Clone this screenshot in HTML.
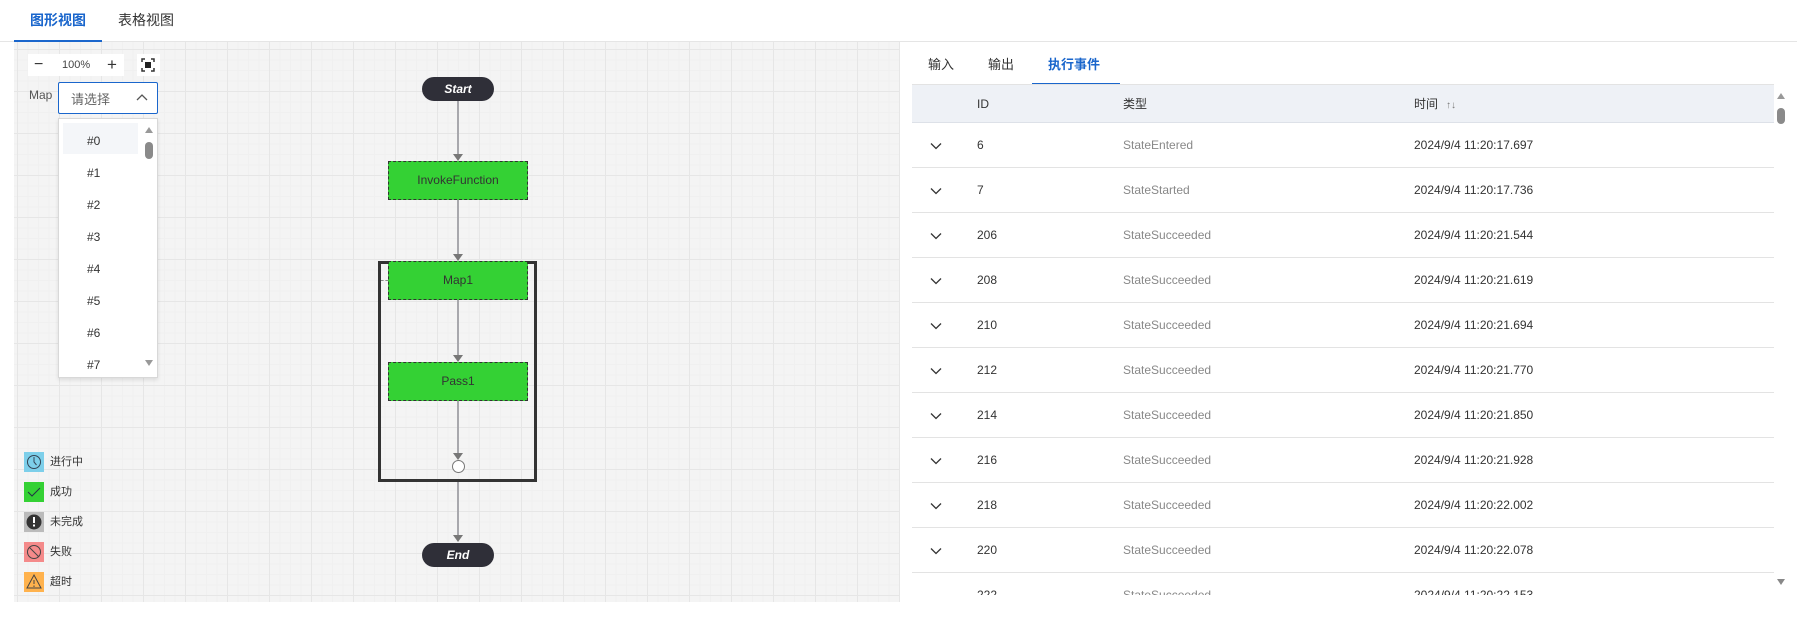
<!DOCTYPE html>
<html><head><meta charset="utf-8"><style>
*{box-sizing:border-box;margin:0;padding:0}
body{width:1797px;height:616px;background:#fff;font-family:"Liberation Sans","Noto Sans CJK SC",sans-serif;position:relative;overflow:hidden;color:#333}
.abs{position:absolute}
.toptab{position:absolute;top:10px;font-size:14px;line-height:20px}
.canvas{position:absolute;left:14px;top:42px;width:886px;height:560px;background-color:#f4f4f4;
background-image:linear-gradient(to right,#e6e6e6 1px,transparent 1px),linear-gradient(to bottom,#e6e6e6 1px,transparent 1px),linear-gradient(to right,#f0f0f0 1px,transparent 1px),linear-gradient(to bottom,#f0f0f0 1px,transparent 1px);
background-size:42px 42px,42px 42px,10.5px 10.5px,10.5px 10.5px;background-position:3px 7px,3px 7px,3px 7px,3px 7px}
.node{position:absolute;left:388px;width:140px;height:39px;background:#34d134;border:1px dashed #333;font-size:12px;color:#333;text-align:center;line-height:37px}
.pill{position:absolute;left:422px;width:72px;height:24px;border-radius:12px;background:#2f2f38;color:#fff;font-weight:bold;font-style:italic;font-size:12px;text-align:center;line-height:24px}
.vl{position:absolute;left:457px;width:2px;background:#a8a8ad}
.arr{position:absolute;left:453px;width:0;height:0;border-left:5px solid transparent;border-right:5px solid transparent;border-top:7px solid #777}
.item{position:absolute;left:62px;width:78px;height:30px;font-size:12px;color:#333;padding-left:25px;line-height:30px}
.leg{position:absolute;left:24px;width:20px;height:20px}
.legt{position:absolute;left:50px;font-size:11px;line-height:20px;color:#333}
.row{position:absolute;left:912px;width:862px;height:45px;border-bottom:1px solid #e3e3e3;font-size:12px}
.row span{position:absolute;top:0;line-height:45px}
.row svg{position:absolute;left:18px;top:19px}
.hd{position:absolute;top:0;line-height:38px}
</style></head><body>
<div class="toptab" style="left:30px;color:#1a66cc;font-weight:bold">图形视图</div>
<div class="toptab" style="left:118px;color:#333">表格视图</div>
<div class="abs" style="left:0;top:41px;width:1797px;height:1px;background:#e5e5e5"></div>
<div class="abs" style="left:14px;top:40px;width:88px;height:2px;background:#1a66cc"></div>

<div class="canvas"></div>
<div class="abs" style="left:28px;top:54px;width:96px;height:22px;background:#fff;font-size:11px;line-height:22px">
 <span class="abs" style="left:6px;font-size:16px">−</span><span class="abs" style="left:34px;color:#444">100%</span><span class="abs" style="left:79px;font-size:17px">+</span></div>
<div class="abs" style="left:137px;top:54px;width:23px;height:22px;background:#fff"></div>
<svg class="abs" style="left:141px;top:58px" width="14" height="14" viewBox="0 0 14 14"><path d="M1 4V1h3M10 1h3v3M13 10v3h-3M4 13H1v-3" fill="none" stroke="#333" stroke-width="1.5"/><rect x="4" y="4" width="6" height="6" fill="#222"/></svg>
<div class="abs" style="left:29px;top:88px;font-size:12px;color:#555">Map</div>
<div class="abs" style="left:58px;top:82px;width:100px;height:32px;background:#fff;border:1px solid #1a66cc;border-radius:2px"></div>
<div class="abs" style="left:71px;top:89px;font-size:13px;color:#666">请选择</div>
<svg class="abs" style="left:136px;top:93px" width="12" height="8" viewBox="0 0 12 8"><path d="M1 7L6 2l5 5" fill="none" stroke="#555" stroke-width="1.3"/></svg>
<div class="abs" style="left:58px;top:118px;width:100px;height:260px;background:#fff;border:1px solid #d8d8d8;box-shadow:0 2px 4px rgba(0,0,0,.1)"></div>
<div class="abs" style="left:63px;top:123px;width:75px;height:31px;background:#f4f6f9"></div>
<div class="item" style="top:126px">#0</div><div class="item" style="top:158px">#1</div><div class="item" style="top:190px">#2</div><div class="item" style="top:222px">#3</div><div class="item" style="top:254px">#4</div><div class="item" style="top:286px">#5</div><div class="item" style="top:318px">#6</div><div class="item" style="top:350px">#7</div>
<div class="abs" style="left:145px;top:127px;border-left:4px solid transparent;border-right:4px solid transparent;border-bottom:6px solid #999"></div>
<div class="abs" style="left:145px;top:142px;width:8px;height:17px;border-radius:4px;background:#8a8a8a"></div>
<div class="abs" style="left:145px;top:360px;border-left:4px solid transparent;border-right:4px solid transparent;border-top:6px solid #999"></div>

<div class="vl" style="top:101px;height:55px"></div><div class="arr" style="top:154px"></div>
<div class="vl" style="top:200px;height:56px"></div><div class="arr" style="top:254px"></div>
<div class="abs" style="left:378px;top:261px;width:159px;height:221px;border:3px solid #333"></div>
<div class="abs" style="left:381px;top:280px;width:7px;border-top:1px dashed #888"></div>
<div class="vl" style="top:300px;height:57px"></div><div class="arr" style="top:355px"></div>
<div class="vl" style="top:401px;height:57px"></div><div class="arr" style="top:453px"></div>
<div class="vl" style="top:482px;height:55px"></div><div class="arr" style="top:535px"></div>
<div class="pill" style="top:77px">Start</div>
<div class="node" style="top:161px">InvokeFunction</div>
<div class="node" style="top:261px">Map1</div>
<div class="node" style="top:362px">Pass1</div>
<div class="abs" style="left:452px;top:460px;width:13px;height:13px;border-radius:50%;background:#fff;border:1px solid #777"></div>
<div class="pill" style="top:543px">End</div>

<div class="leg" style="top:452px;background:#7dcfea"><svg width="20" height="20"><circle cx="10" cy="10" r="6.5" fill="none" stroke="#345" stroke-width="1"/><path d="M10 5v5l2.5 3" fill="none" stroke="#345"/></svg></div><div class="legt" style="top:452px">进行中</div>
<div class="leg" style="top:482px;background:#34d134"><svg width="20" height="20"><path d="M4 10l4 4 8-8" fill="none" stroke="#234" stroke-width="1"/></svg></div><div class="legt" style="top:482px">成功</div>
<div class="leg" style="top:512px;background:#bbb"><svg width="20" height="20"><circle cx="10" cy="10" r="7.5" fill="#333"/><rect x="9" y="5" width="2" height="6" fill="#fff"/><rect x="9" y="12.5" width="2" height="2" fill="#fff"/></svg></div><div class="legt" style="top:512px">未完成</div>
<div class="leg" style="top:542px;background:#f48a8a"><svg width="20" height="20"><circle cx="10" cy="10" r="6.5" fill="none" stroke="#444"/><path d="M5.5 5.5l9 9" stroke="#444"/></svg></div><div class="legt" style="top:542px">失败</div>
<div class="leg" style="top:572px;background:#ffb24d"><svg width="20" height="20"><path d="M10 3L17 16H3z" fill="none" stroke="#444"/><path d="M10 8v4M10 13.5v1.5" stroke="#444"/></svg></div><div class="legt" style="top:572px">超时</div>

<div class="abs" style="left:928px;top:54px;font-size:13px">输入</div>
<div class="abs" style="left:988px;top:54px;font-size:13px">输出</div>
<div class="abs" style="left:1048px;top:54px;font-size:13px;color:#1a66cc;font-weight:bold">执行事件</div>
<div class="abs" style="left:1032px;top:83px;width:88px;height:2px;background:#1a66cc"></div>
<div class="abs" style="left:912px;top:84px;width:862px;height:39px;background:#eef1f6;border-top:1px solid #e3e3e3;border-bottom:1px solid #dde1e8;font-size:12px">
<span class="hd" style="left:65px">ID</span><span class="hd" style="left:211px">类型</span><span class="hd" style="left:502px">时间<span style="font-size:10px;color:#777;margin-left:8px">↑↓</span></span></div>
<div id="rows"></div>
<div class="row" style="top:123px"><svg width="12" height="8"><path d="M1 1.5l5 5 5-5" fill="none" stroke="#333" stroke-width="1.3"/></svg><span style="left:65px">6</span><span style="left:211px;color:#888">StateEntered</span><span style="left:502px">2024/9/4 11:20:17.697</span></div>
<div class="row" style="top:168px"><svg width="12" height="8"><path d="M1 1.5l5 5 5-5" fill="none" stroke="#333" stroke-width="1.3"/></svg><span style="left:65px">7</span><span style="left:211px;color:#888">StateStarted</span><span style="left:502px">2024/9/4 11:20:17.736</span></div>
<div class="row" style="top:213px"><svg width="12" height="8"><path d="M1 1.5l5 5 5-5" fill="none" stroke="#333" stroke-width="1.3"/></svg><span style="left:65px">206</span><span style="left:211px;color:#888">StateSucceeded</span><span style="left:502px">2024/9/4 11:20:21.544</span></div>
<div class="row" style="top:258px"><svg width="12" height="8"><path d="M1 1.5l5 5 5-5" fill="none" stroke="#333" stroke-width="1.3"/></svg><span style="left:65px">208</span><span style="left:211px;color:#888">StateSucceeded</span><span style="left:502px">2024/9/4 11:20:21.619</span></div>
<div class="row" style="top:303px"><svg width="12" height="8"><path d="M1 1.5l5 5 5-5" fill="none" stroke="#333" stroke-width="1.3"/></svg><span style="left:65px">210</span><span style="left:211px;color:#888">StateSucceeded</span><span style="left:502px">2024/9/4 11:20:21.694</span></div>
<div class="row" style="top:348px"><svg width="12" height="8"><path d="M1 1.5l5 5 5-5" fill="none" stroke="#333" stroke-width="1.3"/></svg><span style="left:65px">212</span><span style="left:211px;color:#888">StateSucceeded</span><span style="left:502px">2024/9/4 11:20:21.770</span></div>
<div class="row" style="top:393px"><svg width="12" height="8"><path d="M1 1.5l5 5 5-5" fill="none" stroke="#333" stroke-width="1.3"/></svg><span style="left:65px">214</span><span style="left:211px;color:#888">StateSucceeded</span><span style="left:502px">2024/9/4 11:20:21.850</span></div>
<div class="row" style="top:438px"><svg width="12" height="8"><path d="M1 1.5l5 5 5-5" fill="none" stroke="#333" stroke-width="1.3"/></svg><span style="left:65px">216</span><span style="left:211px;color:#888">StateSucceeded</span><span style="left:502px">2024/9/4 11:20:21.928</span></div>
<div class="row" style="top:483px"><svg width="12" height="8"><path d="M1 1.5l5 5 5-5" fill="none" stroke="#333" stroke-width="1.3"/></svg><span style="left:65px">218</span><span style="left:211px;color:#888">StateSucceeded</span><span style="left:502px">2024/9/4 11:20:22.002</span></div>
<div class="row" style="top:528px"><svg width="12" height="8"><path d="M1 1.5l5 5 5-5" fill="none" stroke="#333" stroke-width="1.3"/></svg><span style="left:65px">220</span><span style="left:211px;color:#888">StateSucceeded</span><span style="left:502px">2024/9/4 11:20:22.078</span></div>
<div class="row" style="top:573px;border:none"><span style="left:65px">222</span><span style="left:211px;color:#888">StateSucceeded</span><span style="left:502px">2024/9/4 11:20:22.153</span></div>
<div class="abs" style="left:912px;top:595px;width:885px;height:21px;background:#fff"></div>
<div class="abs" style="left:1777px;top:93px;border-left:4px solid transparent;border-right:4px solid transparent;border-bottom:6px solid #999"></div>
<div class="abs" style="left:1777px;top:108px;width:8px;height:16px;border-radius:4px;background:#8a8a8a"></div>
<div class="abs" style="left:1777px;top:579px;border-left:4px solid transparent;border-right:4px solid transparent;border-top:6px solid #888"></div>
</body></html>
